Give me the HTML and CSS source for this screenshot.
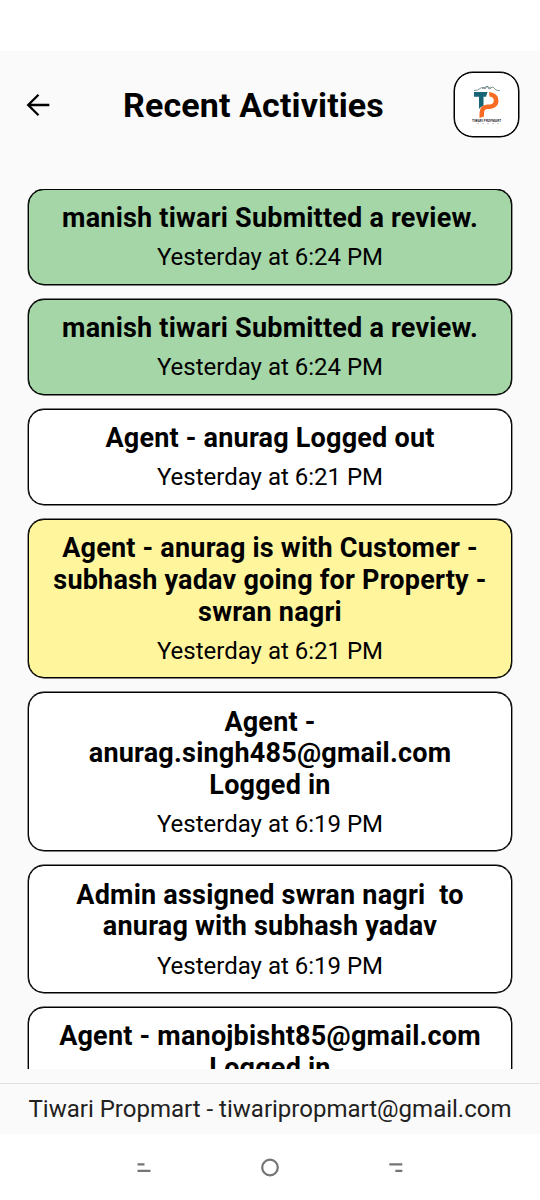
FILE: index.html
```html
<!DOCTYPE html>
<html lang="en">
<head>
<meta charset="utf-8">
<title>Recent Activities</title>
<link rel="stylesheet" href="styles.css">
</head>
<body>
<div class="status-bar"></div>
<main class="screen">
  <header class="header">
    <svg class="back" viewBox="0 0 24 24" fill="none" stroke="#000" stroke-width="2.3"><path d="M23.300 12H2M12.500 1.700L2.200 12l10.300 10.300"/></svg>
    <h1 class="title">Recent Activities</h1>
    <div class="logo">
      <svg class="logo-art" viewBox="0 0 44 48">
        <path d="M9 10.500q4 .2 6-2t4 0l3-2.500 3 2 3-1 3 3q2 .8 4 .5M17 9l2-2 1 2 2-3 2 3 2-1" fill="none" stroke="#526e70" stroke-width=".7"/>
        <path d="M9 12h13.500l-1.500 4.800H18.500v9q-3 1-4.500 3.200V16.800H9z" fill="#176477"/>
        <path d="M24 12q9.500 1 9.500 8.500t-8.500 8.500h-2.500q-3.500 0-3.500 4v3.500l-4.500 1.500v-5q0-8 8-8.500h2.500q3.800-.5 3.800-4t-4.300-4z" fill="#f96b22"/>
        <text x="7" y="42" class="logo-name" textLength="29">TIWARI PROPMART</text>
        <path d="M12 43.700h23" stroke="#aaa" stroke-width=".6" stroke-dasharray="2 3"/>
      </svg>
    </div>
  </header>
  <section class="feed">
    <article class="card green"><h2>manish tiwari Submitted a review.</h2><p>Yesterday at 6:24 PM</p></article>
    <article class="card green"><h2>manish tiwari Submitted a review.</h2><p>Yesterday at 6:24 PM</p></article>
    <article class="card"><h2>Agent - anurag Logged out</h2><p>Yesterday at 6:21 PM</p></article>
    <article class="card yellow"><h2>Agent - anurag is with Customer -<br>subhash yadav going for Property -<br>swran nagri</h2><p>Yesterday at 6:21 PM</p></article>
    <article class="card"><h2>Agent -<br>anurag.singh485@gmail.com<br>Logged in</h2><p>Yesterday at 6:19 PM</p></article>
    <article class="card"><h2>Admin assigned swran nagri&nbsp; to<br>anurag with subhash yadav</h2><p>Yesterday at 6:19 PM</p></article>
    <article class="card"><h2>Agent - manojbisht85@gmail.com<br>Logged in</h2></article>
  </section>
  <footer class="footer">Tiwari Propmart - tiwaripropmart@gmail.com</footer>
</main>
<nav class="nav">
  <svg class="nav-icon" viewBox="0 0 20 20"><path d="M3.500 7.300h7M3.500 13.800h13" /></svg>
  <svg class="nav-icon" viewBox="0 0 20 20"><circle cx="10" cy="10.500" r="7.800"/></svg>
  <svg class="nav-icon" viewBox="0 0 20 20"><path d="M3.300 7.300h13M9.300 13.800h7"/></svg>
</nav>
</body>
</html>
```

FILE: styles.css
```css
* { box-sizing: border-box; }
body {
  margin: 0;
  width: 540px;
  height: 1200px;
  display: flex;
  flex-direction: column;
  overflow: hidden;
  background: #fff;
  color: #000;
  font-family: Roboto, sans-serif;
}
h1, h2, p { margin: 0; white-space: nowrap; }
.status-bar { height: 51px; flex: none; }
.screen {
  height: 1083px;
  flex: none;
  display: flex;
  flex-direction: column;
  background: #fafafa;
}
.header {
  height: 137.700px;
  flex: none;
  display: flex;
  justify-content: space-between;
  align-items: flex-start;
  padding: 21px 21px 0 26px;
}
.back { width: 24px; height: 24px; margin-top: 21px; }
.title {
  font-size: 34px;
  line-height: 40px;
  font-weight: 700;
  letter-spacing: .12px;
  margin: 12.500px 0 0 3px;
}
.logo {
  width: 65px;
  height: 65px;
  border: 1px solid #000;
  box-shadow: 0 0 0 .5px #000;
  border-radius: 19px;
  background: #fff;
  padding: 7px 0 0 10px;
}
.logo-art { display: block; width: 44px; height: 48px; }
.logo-name { font: 700 3px Roboto, sans-serif; fill: #222; }
.feed {
  height: 880.300px;
  flex: none;
  overflow: hidden;
  display: flex;
  flex-direction: column;
  gap: 14px;
  padding: 0 28px;
}
.card {
  flex: none;
  border: 1px solid #000;
  box-shadow: 0 0 0 .4px #000;
  border-radius: 16px;
  background: #fff;
  padding: 13.500px 0 12.350px;
  text-align: center;
}
.green { background: #a5d6a7; }
.yellow { background: #fff59d; }
.card h2 { font-size: 27px; line-height: 31.650px; font-weight: 700; letter-spacing: .21px; }
.card p { font-size: 24px; line-height: 28px; margin-top: 8.500px; }
.footer {
  margin-top: 14px;
  flex: 1;
  border-top: 1px solid #e0e0e0;
  font-size: 24px;
  line-height: 50px;
  text-align: center;
  white-space: nowrap;
  color: #212121;
}
.nav {
  flex: 1;
  display: flex;
  justify-content: center;
  align-items: center;
  gap: 106px;
}
.nav-icon { width: 20px; height: 20px; fill: none; stroke: #757575; stroke-width: 2.2; }
```
